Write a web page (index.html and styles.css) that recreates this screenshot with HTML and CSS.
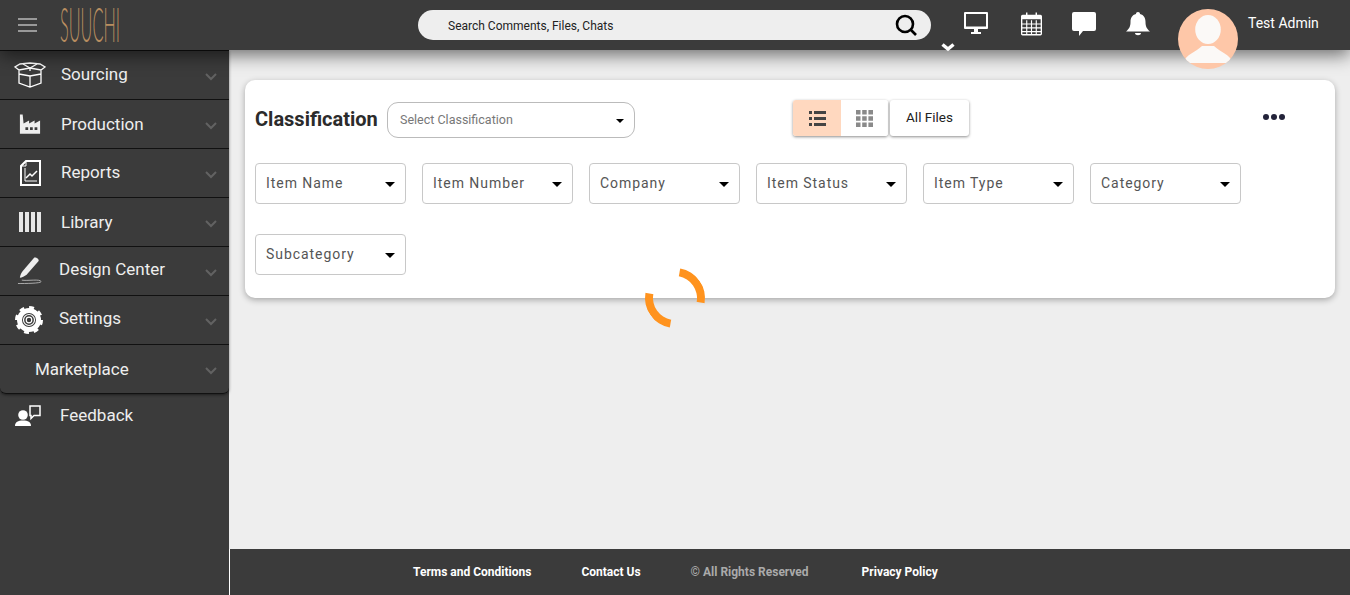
FILE: index.html
```html
<!DOCTYPE html>
<html lang="en">
<head>
    <meta charset="UTF-8">
    <title>Suuchi</title>
    <link rel="stylesheet" href="styles.css">
</head>
<body>
    <header class="topbar">
        <div class="hamburger"><span></span><span></span><span></span></div>
        <svg class="logo" viewBox="0 0 60 34" width="60" height="34"><text class="logo-text" x="0" y="34" textLength="60" lengthAdjust="spacingAndGlyphs">SUUCHI</text></svg>
        <div class="search">
            <span class="search-text">Search Comments, Files, Chats</span>
            <svg class="search-icon" viewBox="0 0 24 24" width="24" height="24"><circle cx="11" cy="11" r="8" fill="none" stroke="#000" stroke-width="2.6"/><path d="M17 17l5 5" stroke="#000" stroke-width="2.6"/></svg>
        </div>
        <svg class="top-chevron" viewBox="0 0 14 9" width="14" height="9"><path d="M1.500 1.500l5.500 4.500 5.500-4.500" fill="none" stroke="#fff" stroke-width="3.500"/></svg>
        <div class="top-icons">
            <svg class="monitor-icon" viewBox="0 0 24 24" width="24" height="24"><path d="M1 0h22a1 1 0 0 1 1 1v15a1 1 0 0 1-1 1H1a1 1 0 0 1-1-1V1a1 1 0 0 1 1-1zM2 2v12.500h20V2z" fill="#fff" fill-rule="evenodd"/><path d="M10 17h4v3h3v2H7v-2h3z" fill="#fff"/></svg>
            <svg viewBox="0 0 22 24" width="21" height="24"><rect x=".7" y="3" width="20.600" height="20.300" rx="1" fill="none" stroke="#fff" stroke-width="1.400"/><rect x="1" y="3" width="20" height="4" fill="#fff"/><path d="M6 0v5M16 0v5" stroke="#fff" stroke-width="1.500"/><path d="M1 12h20M1 16h20M1 20h20M6 8v15M11 8v15M16 8v15" stroke="#fff" stroke-width="1.200"/></svg>
            <svg viewBox="0 0 24 24" width="24" height="24"><path d="M2 0h20a2 2 0 0 1 2 2v15a2 2 0 0 1-2 2H11l-4 5v-5H2a2 2 0 0 1-2-2V2a2 2 0 0 1 2-2z" fill="#fff"/></svg>
            <svg viewBox="0 0 24 24" width="24" height="24"><path d="M12 0c1.300 0 2 .8 2 2 4 1 5.500 4 5.500 8 0 4 1 6.500 4.500 9.500H0C3.500 16.500 4.500 14 4.500 10c0-4 1.500-7 5.500-8 0-1.200.7-2 2-2z" fill="#fff"/><path d="M9 21h6c0 3-6 3-6 0z" fill="#fff"/></svg>
        </div>
        <div class="avatar">
            <svg viewBox="0 0 60 60" width="60" height="60"><ellipse cx="30" cy="20.500" rx="12.800" ry="14.500" fill="#fbf9f7"/><path d="M5 54C8 45 18 43 24 37h12c6 6 16 8 19 17z" fill="#fbf9f7"/></svg>
        </div>
        <div class="user-name">Test Admin</div>
    </header>

    <div class="page">
        <nav class="sidebar">
            <ul class="menu">
                <li class="menu-item">
                    <span class="menu-icon"><svg viewBox="0 0 32 26" width="32" height="26" fill="none" stroke="#fff" stroke-width="1.300"><path d="M16 1L6 2 1 5l4 3 11-2 11 2 4-3-5-3zM16 6v3M5 8v13l11 4 11-4V8M5 12l11 2 11-2M16 14v11"/><path d="M9 2l7 4 7-4"/></svg></span>
                    <span class="menu-label label-up">Sourcing</span>
                    <svg class="menu-arrow" viewBox="0 0 12 8" width="12" height="8"><path d="M1 1l5 5 5-5"/></svg>
                </li>
                <li class="menu-item">
                    <span class="menu-icon"><svg viewBox="0 0 24 22" width="22" height="21"><path d="M1 0h3l1 10 6-3.500V10l6-3.500V10l6-3.500V21H1z" fill="#eee"/><path d="M7 14h3v3H7zM12 14h3v3h-3zM17 14h3v3h-3z" fill="#3b3b3b"/></svg></span>
                    <span class="menu-label">Production</span>
                    <svg class="menu-arrow" viewBox="0 0 12 8" width="12" height="8"><path d="M1 1l5 5 5-5"/></svg>
                </li>
                <li class="menu-item">
                    <span class="menu-icon"><svg viewBox="0 0 21 26" width="21" height="26" fill="none" stroke="#fff"><path d="M6 1h14v24H1V6z" stroke-width="2"/><path d="M6 1v5H1" stroke-width="1"/><path d="M5 8v13h12" stroke-width="1"/><path d="M6 18l4-4 2 2 5-5" stroke-width="1.500"/></svg></span>
                    <span class="menu-label label-up">Reports</span>
                    <svg class="menu-arrow" viewBox="0 0 12 8" width="12" height="8"><path d="M1 1l5 5 5-5"/></svg>
                </li>
                <li class="menu-item">
                    <span class="menu-icon"><svg viewBox="0 0 22 20" width="22" height="20" fill="#e6e6e6"><path d="M0 0h4v20H0zM6 0h4v20H6zM12 0h4v20h-4zM18 0h4v20h-4z"/></svg></span>
                    <span class="menu-label">Library</span>
                    <svg class="menu-arrow" viewBox="0 0 12 8" width="12" height="8"><path d="M1 1l5 5 5-5"/></svg>
                </li>
                <li class="menu-item menu-item-tight">
                    <span class="menu-icon"><svg viewBox="0 0 26 28" width="25" height="28"><path d="M18 0c2-.5 5 1.500 4.500 3.500L10 18c-2 1.500-5 3-7 3 0-2 1.500-5 3-7z" fill="#eee"/><path d="M1 27c7 0 24 0 24-2 0-3-15-.5-20-1.500" fill="none" stroke="#ccc" stroke-width=".8"/></svg></span>
                    <span class="menu-label">Design Center</span>
                    <svg class="menu-arrow" viewBox="0 0 12 8" width="12" height="8"><path d="M1 1l5 5 5-5"/></svg>
                </li>
                <li class="menu-item menu-item-tight">
                    <span class="menu-icon"><svg viewBox="0 0 28 28" width="28" height="28"><circle cx="14" cy="14" r="9.500" fill="none" stroke="#fff" stroke-width="5"/><circle cx="14" cy="14" r="11" fill="none" stroke="#fff" stroke-width="6" stroke-dasharray="4.300 4.300"/><circle cx="14" cy="14" r="5.500" fill="none" stroke="#fff" stroke-width="1.200"/><circle cx="14" cy="14" r="2.800" fill="none" stroke="#fff" stroke-width="1.200"/></svg></span>
                    <span class="menu-label">Settings</span>
                    <svg class="menu-arrow" viewBox="0 0 12 8" width="12" height="8"><path d="M1 1l5 5 5-5"/></svg>
                </li>
                <li class="menu-item menu-item-last">
                    <span class="menu-label">Marketplace</span>
                    <svg class="menu-arrow" viewBox="0 0 12 8" width="12" height="8"><path d="M1 1l5 5 5-5"/></svg>
                </li>
            </ul>
            <div class="feedback">
                <span class="menu-icon"><svg viewBox="0 0 26 22" width="26" height="22"><circle cx="8" cy="10" r="4.800" fill="#fff"/><path d="M0 21c0-4 3-5.500 8-5.500s8 1.500 8 5.500z" fill="#fff"/><path d="M15 1h10v9.500h-6l-3 3v-3h-1z" fill="none" stroke="#fff" stroke-width="1.500"/></svg></span>
                <span class="menu-label label-up">Feedback</span>
            </div>
        </nav>

        <div class="content">
            <main class="main">
                <section class="card">
                    <div class="card-head">
                        <h1 class="card-title">Classification</h1>
                        <div class="classification-select">
                            <span>Select Classification</span>
                            <i class="caret caret-small"></i>
                        </div>
                        <div class="view-group">
                            <div class="view-toggle">
                                <button class="view-btn view-btn-active" type="button">
                                    <svg viewBox="0 0 17 15" width="17" height="15" fill="#444"><path d="M0 0h3v3H0zM5 0h12v3H5zM0 6h3v3H0zM5 6h12v3H5zM0 12h3v3H0zM5 12h12v3H5z"/></svg>
                                </button>
                                <button class="view-btn" type="button">
                                    <svg viewBox="0 0 17 17" width="17" height="17" fill="#8a8a8a"><path d="M0 0h4.500v4.500H0zM6.200 0h4.500v4.500H6.200zM12.400 0h4.600v4.500h-4.600zM0 6.200h4.500v4.500H0zM6.200 6.200h4.500v4.500H6.200zM12.400 6.200h4.600v4.500h-4.600zM0 12.400h4.500V17H0zM6.200 12.400h4.500V17H6.200zM12.400 12.400h4.600V17h-4.600z"/></svg>
                                </button>
                            </div>
                            <button class="all-files" type="button">All Files</button>
                        </div>
                        <div class="more-dots"><span></span><span></span><span></span></div>
                    </div>
                    <div class="filters">
                        <div class="filter"><span class="filter-text">Item Name</span><i class="caret"></i></div>
                        <div class="filter"><span class="filter-text">Item Number</span><i class="caret"></i></div>
                        <div class="filter"><span class="filter-text">Company</span><i class="caret"></i></div>
                        <div class="filter"><span class="filter-text">Item Status</span><i class="caret"></i></div>
                        <div class="filter"><span class="filter-text">Item Type</span><i class="caret"></i></div>
                        <div class="filter"><span class="filter-text">Category</span><i class="caret"></i></div>
                        <div class="filter"><span class="filter-text">Subcategory</span><i class="caret"></i></div>
                    </div>
                </section>
                <div class="spinner"></div>
            </main>
            <footer class="footer">
                <a>Terms and Conditions</a>
                <a>Contact Us</a>
                <span class="copyright">© All Rights Reserved</span>
                <a class="privacy">Privacy Policy</a>
            </footer>
        </div>
    </div>
</body>
</html>
```

FILE: styles.css
```css
* {
    box-sizing: border-box;
}

html, body {
    height: 100%;
}

body {
    margin: 0;
    font-family: Roboto, "Liberation Sans", sans-serif;
    background-color: #eee;
    display: flex;
    flex-direction: column;
    overflow: hidden;
}

/* top bar */
.topbar {
    height: 50px;
    flex-shrink: 0;
    background-color: #3b3b3b;
    display: flex;
    align-items: center;
    position: relative;
    z-index: 5;
    box-shadow: 0 5px 18px rgba(0, 0, 0, 0.55);
}

.hamburger {
    width: 19px;
    margin-left: 18px;
    display: flex;
    flex-direction: column;
    gap: 4px;
}

.hamburger span {
    height: 2px;
    background-color: #999;
}

.logo {
    margin-left: 23px;
    flex-shrink: 0;
    overflow: visible;
}

.logo-text {
    font-family: Lato, sans-serif;
    font-weight: 300;
    font-size: 47px;
    fill: #b98e60;
}

.search {
    width: 513px;
    height: 30px;
    margin-left: 298px;
    border-radius: 15px;
    background-color: #eee;
    display: flex;
    align-items: center;
    justify-content: space-between;
    padding: 0 13px 0 30px;
}

.search-text {
    font-size: 12px;
    color: #222;
    margin-top: 2px;
}

.top-chevron {
    position: absolute;
    left: 941px;
    top: 43px;
}

.top-icons {
    display: flex;
    align-items: center;
    gap: 30px;
    margin-left: 33px;
    margin-top: -2px;
}

.monitor-icon {
    margin-right: 3px;
}

.avatar {
    position: absolute;
    left: 1178px;
    top: 9px;
    width: 60px;
    height: 60px;
    border-radius: 50%;
    background-color: #fec7a8;
    overflow: hidden;
}

.avatar svg {
    display: block;
}

.user-name {
    position: absolute;
    left: 1248px;
    top: 15px;
    font-size: 14px;
    color: #fff;
}

/* sidebar */
.page {
    flex: 1;
    display: flex;
    min-height: 0;
}

.sidebar {
    width: 229px;
    flex-shrink: 0;
    background-color: #3b3b3b;
}

.menu {
    list-style: none;
    margin: 0;
    padding: 0;
    border-radius: 0 0 6px 6px;
    box-shadow: 0 1px 3px rgba(0, 0, 0, 0.5);
}

.menu-item {
    height: 49px;
    display: flex;
    align-items: center;
    border-top: 1px solid #111;
    padding-left: 14px;
    position: relative;
}

.menu-item-tight {
    padding-left: 13px;
}

.menu-item-tight .menu-label {
    margin-left: 14px;
    margin-bottom: 4px;
}

.menu-item-last {
    padding-left: 35px;
    border-bottom: 1px solid #111;
    height: 50px;
    border-radius: 0 0 6px 6px;
}

.menu-item-last .menu-label {
    margin-left: 0;
}

.menu-icon {
    width: 32px;
    height: 28px;
    flex-shrink: 0;
    display: flex;
    align-items: center;
    justify-content: center;
}

.menu-label {
    margin-left: 15px;
    font-size: 17px;
    color: #eee;
}

.label-up {
    margin-bottom: 2px;
}

.menu-arrow {
    position: absolute;
    left: 205px;
    top: 22px;
    fill: none;
    stroke: #626262;
    stroke-width: 2;
}

.feedback {
    height: 44px;
    display: flex;
    align-items: center;
    padding-left: 12px;
}

.feedback .menu-label {
    margin-left: 16px;
}

/* content */
.content {
    flex: 1;
    min-width: 0;
    display: flex;
    flex-direction: column;
}

.main {
    flex: 1;
    padding: 30px 15px 0 16px;
    position: relative;
}

.card {
    background-color: #fff;
    border-radius: 10px;
    height: 218px;
    padding: 20px 10px 0;
    box-shadow: 0 2px 6px rgba(0, 0, 0, 0.3);
}

.card-head {
    display: flex;
    align-items: center;
    height: 38px;
}

.card-title {
    margin: 0;
    font-size: 20px;
    font-weight: 700;
    color: #2b2b2b;
    width: 132px;
}

.classification-select {
    width: 248px;
    height: 36px;
    margin-top: 2px;
    border: 1px solid #bbb;
    border-radius: 11px;
    display: flex;
    align-items: center;
    justify-content: space-between;
    padding: 0 10px 2px 12px;
    font-size: 12.500px;
    color: #777;
}

.caret {
    width: 0;
    height: 0;
    border-left: 5px solid transparent;
    border-right: 5px solid transparent;
    border-top: 5px solid #000;
    margin-top: 2px;
}

.caret-small {
    border-left-width: 4px;
    border-right-width: 4px;
    border-top-width: 4px;
    margin-top: 4px;
}

.view-group {
    display: flex;
    gap: 2px;
    margin-left: 158px;
    margin-top: -2px;
}

.view-toggle {
    display: flex;
    border-radius: 3px;
    overflow: hidden;
    box-shadow: 0 1px 3px rgba(0, 0, 0, 0.45);
}

.view-btn {
    width: 47px;
    height: 36px;
    border: none;
    padding: 0;
    background-color: #fff;
    display: flex;
    align-items: center;
    justify-content: center;
}

.view-btn-active {
    width: 48px;
    background-color: #ffd8bf;
}

.all-files {
    width: 79px;
    height: 36px;
    border: none;
    border-radius: 3px;
    padding: 0 0 2px;
    background-color: #fff;
    font-family: inherit;
    font-size: 13.500px;
    color: #222;
    box-shadow: 0 1px 3px rgba(0, 0, 0, 0.45);
}

.more-dots {
    display: flex;
    gap: 2px;
    margin-left: 294px;
    margin-top: -4px;
}

.more-dots span {
    width: 6px;
    height: 6px;
    border-radius: 50%;
    background-color: #23233a;
}

.filters {
    display: flex;
    flex-wrap: wrap;
    gap: 30px 16px;
    margin-top: 25px;
}

.filter {
    width: 151px;
    height: 41px;
    border: 1px solid #c8c8c8;
    border-radius: 4px;
    display: flex;
    align-items: center;
    justify-content: space-between;
    padding: 0 10.500px 0 10px;
    font-size: 14px;
    letter-spacing: 0.95px;
    color: #555;
}

.filter-text {
    margin-bottom: 2px;
}

.spinner {
    position: absolute;
    left: 416px;
    top: 218px;
    width: 60px;
    height: 60px;
    border: 8px solid;
    border-color: #ff931e transparent;
    border-radius: 50%;
    transform: rotate(55deg);
}

/* footer */
.footer {
    height: 46px;
    flex-shrink: 0;
    background-color: #3b3b3b;
    border-left: 1px solid #fff;
    display: flex;
    align-items: center;
    gap: 50px;
    padding-left: 183px;
    font-size: 12px;
    font-weight: 700;
    color: #fff;
}

.copyright {
    color: #aaa;
}

.privacy {
    margin-left: 3px;
}
```
